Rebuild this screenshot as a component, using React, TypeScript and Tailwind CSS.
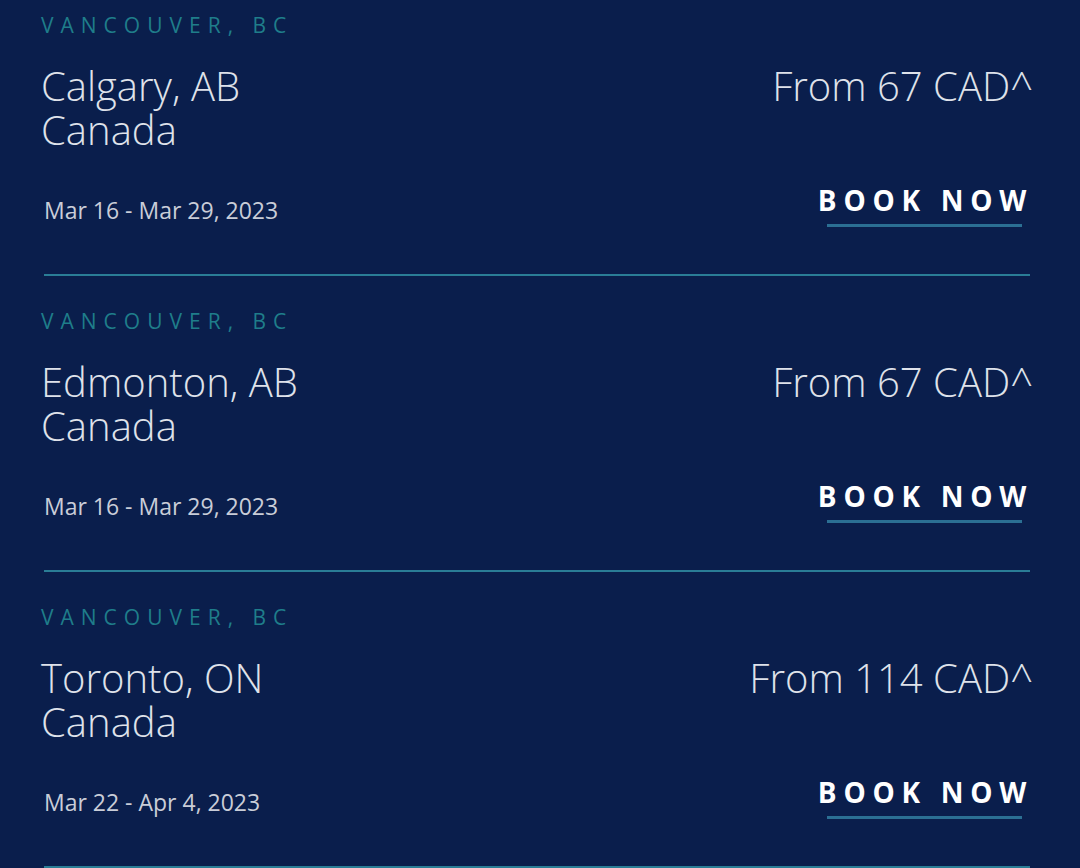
const fares = [
  { city: 'Calgary, AB', price: 'From 67 CAD^', dates: 'Mar 16 - Mar 29, 2023' },
  { city: 'Edmonton, AB', price: 'From 67 CAD^', dates: 'Mar 16 - Mar 29, 2023' },
  { city: 'Toronto, ON', price: 'From 114 CAD^', dates: 'Mar 22 - Apr 4, 2023' },
];

function FareCard({ city, price, dates, first }: { city: string; price: string; dates: string; first: boolean }) {
  return (
    <div className={first ? 'pt-[11px]' : 'pt-[31px]'}>
      <div className="text-[21px] leading-[28px] tracking-[7px] text-[#1f7d8a]">VANCOUVER, BC</div>
      <div className="mt-[25px] flex justify-between">
        <div className="text-[40px] leading-[44px] font-light text-[#dfe2ea]">
          <div>{city}</div>
          <div>Canada</div>
        </div>
        <div className="text-[40px] leading-[44px] font-light text-[#dfe2ea] -mr-[3px]">{price}</div>
      </div>
      <div className="mt-[31px] flex justify-between items-start">
        <div className="mt-[12px] ml-[3px] text-[23px] leading-[30px] text-[#c9cdd8]">{dates}</div>
        <div className="flex flex-col items-end">
          <div className="text-[28px] leading-[34px] font-bold tracking-[0.24em] text-white -mr-[3px]">BOOK NOW</div>
          <div className="mt-[7px] mr-[8px] h-[3px] w-[195px] bg-[#2b6f93]" />
        </div>
      </div>
      <div className="mt-[47px] ml-[3px] h-[2px] bg-[#2a7d96]" />
    </div>
  );
}

export default function App() {
  return (
    <div className="w-[1080px] h-[868px] overflow-hidden bg-[#0a1e4c] px-[41px] pr-[50px] font-['Open_Sans',sans-serif]">
      {fares.map((f, i) => (
        <FareCard key={i} {...f} first={i === 0} />
      ))}
    </div>
  );
}
